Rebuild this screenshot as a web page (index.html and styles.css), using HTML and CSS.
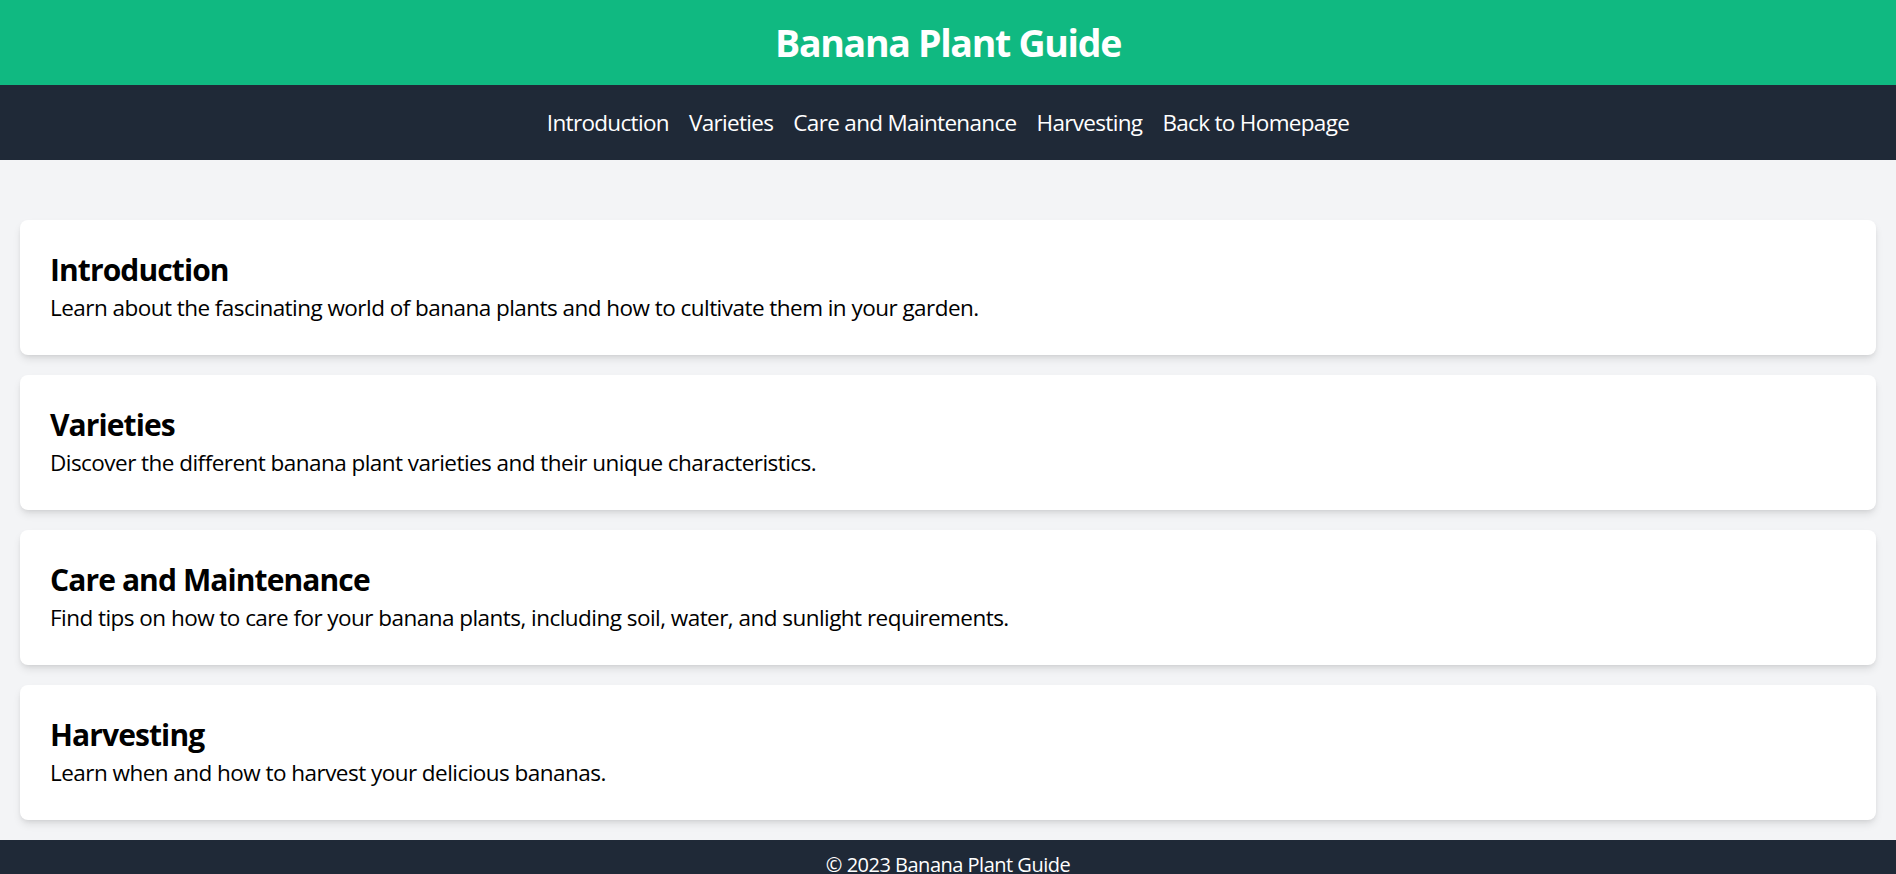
FILE: index.html
```html
<!DOCTYPE html>
<html lang="en">
<head>
<meta charset="utf-8">
<title>Banana Plant Guide</title>
<link rel="stylesheet" href="styles.css">
</head>
<body>
<header class="site-header">
  <h1 class="site-title">Banana Plant Guide</h1>
</header>
<nav class="site-nav">
  <a class="nav-link" href="#introduction">Introduction</a>
  <a class="nav-link" href="#varieties">Varieties</a>
  <a class="nav-link" href="#care">Care and Maintenance</a>
  <a class="nav-link" href="#harvesting">Harvesting</a>
  <a class="nav-link" href="#home">Back to Homepage</a>
</nav>
<main class="content">
  <section class="card" id="introduction">
    <h2 class="card-title">Introduction</h2>
    <p class="card-text">Learn about the fascinating world of banana plants and how to cultivate them in your garden.</p>
  </section>
  <section class="card" id="varieties">
    <h2 class="card-title">Varieties</h2>
    <p class="card-text">Discover the different banana plant varieties and their unique characteristics.</p>
  </section>
  <section class="card" id="care">
    <h2 class="card-title">Care and Maintenance</h2>
    <p class="card-text">Find tips on how to care for your banana plants, including soil, water, and sunlight requirements.</p>
  </section>
  <section class="card" id="harvesting">
    <h2 class="card-title">Harvesting</h2>
    <p class="card-text">Learn when and how to harvest your delicious bananas.</p>
  </section>
</main>
<footer class="site-footer">
  <p class="footer-text">&copy; 2023 Banana Plant Guide</p>
</footer>
</body>
</html>
```
FILE: styles.css
```css
* { box-sizing: border-box; }
html, body { margin: 0; padding: 0; }
body {
  background: #f3f4f6;
  font-family: "Open Sans", "Noto Sans", sans-serif;
  color: #000;
}
.site-header {
  background: #10b981;
  padding: 20px;
  text-align: center;
}
.site-title {
  margin: 0;
  color: #fff;
  font-size: 37.5px;
  line-height: 45px;
  font-weight: 700;
  letter-spacing: -0.035em;
}
.site-nav {
  background: #1f2937;
  padding: 20px;
  display: flex;
  justify-content: center;
  gap: 20px;
}
.nav-link {
  color: #fff;
  text-decoration: none;
  font-size: 22.5px;
  line-height: 35px;
  letter-spacing: -0.03em;
}
.content {
  padding: 60px 20px 20px;
  display: flex;
  flex-direction: column;
  gap: 20px;
}
.card {
  background: #fff;
  border-radius: 8px;
  padding: 30px;
  box-shadow: 0 5px 8px -1px rgba(0,0,0,0.1), 0 2px 5px -2px rgba(0,0,0,0.1);
}
.card-title {
  margin: 0;
  font-size: 30px;
  line-height: 40px;
  font-weight: 700;
  letter-spacing: -0.03em;
}
.card-text {
  margin: 0;
  font-size: 22.5px;
  line-height: 35px;
  letter-spacing: -0.024em;
}
.site-footer {
  background: #1f2937;
  padding: 10px 20px 20px;
  text-align: center;
}
.footer-text {
  margin: 0;
  color: #fff;
  font-size: 20px;
  line-height: 30px;
  letter-spacing: -0.025em;
}
```
